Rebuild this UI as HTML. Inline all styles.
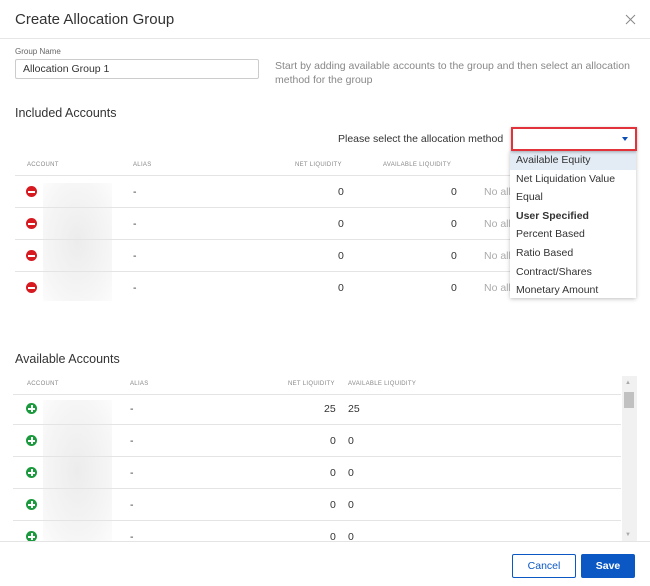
<!DOCTYPE html><html><head><style>
*{margin:0;padding:0;box-sizing:border-box}
body{width:650px;height:586px;background:#fff;font-family:"Liberation Sans",sans-serif;color:#333;position:relative;overflow:hidden}
.a{position:absolute;white-space:nowrap}
.h{font-size:6px;color:#888;letter-spacing:.3px}
.line{position:absolute;height:1px;background:#e4e4e4}
.t{font-size:10.5px;color:#333}
.blur{position:absolute;left:43px;width:69px;background:radial-gradient(ellipse at 50% 50%,#ececec,#f6f6f6 70%,#fcfcfc)}
.ic{position:absolute;left:26px;width:11px;height:11px;border-radius:50%}
.ic.r{background:#d71920}.ic.g{background:#1a9a3c}
.ic.r:after{content:"";position:absolute;left:2px;top:4.5px;width:7px;height:2px;background:#fff}
.ic.g:after{content:"";position:absolute;left:2px;top:4.5px;width:7px;height:2px;background:#fff}
.ic.g:before{content:"";position:absolute;left:4.5px;top:2px;width:2px;height:7px;background:#fff}
.dd div{height:18.6px;line-height:18.6px;padding-left:6px;font-size:10.5px;color:#333}
</style></head><body>
<div class="a" style="left:15px;top:11px;font-size:15px;color:#333">Create Allocation Group</div>
<svg class="a" style="left:625px;top:14px" width="11" height="11"><path d="M1 1L10 10M10 1L1 10" stroke="#888" stroke-width="1"/></svg>
<div class="line" style="left:0;top:38px;width:650px;background:#e6e6e6"></div>
<div class="a" style="left:15px;top:47px;font-size:8px;color:#666">Group Name</div>
<div class="a" style="left:15px;top:59px;width:244px;height:20px;border:1px solid #ccc;border-radius:2px;font-size:10.5px;padding:3px 0 0 7px;color:#333">Allocation Group 1</div>
<div class="a" style="left:275px;top:59px;font-size:10.5px;color:#888;line-height:14px">Start by adding available accounts to the group and then select an allocation<br>method for the group</div>
<div class="a" style="left:15px;top:106px;font-size:12.5px;color:#333">Included Accounts</div>
<div class="a" style="left:338px;top:133px;font-size:10.5px;color:#333">Please select the allocation method</div>
<div class="a dd" style="left:510px;top:151px;width:126px;height:147px;background:#fff;box-shadow:0 1px 4px rgba(0,0,0,.25);z-index:2">
<div style="background:#e3ebf5">Available Equity</div><div>Net Liquidation Value</div><div>Equal</div><div style="font-weight:bold">User Specified</div><div>Percent Based</div><div>Ratio Based</div><div>Contract/Shares</div><div>Monetary Amount</div></div>
<div class="a" style="left:511px;top:127px;width:126px;height:24px;border:2px solid #e2323a;box-shadow:0 1px 3px rgba(0,0,0,.3);background:#fff;z-index:3"></div>
<div class="a" style="left:622px;top:137px;width:0;height:0;border-left:3px solid transparent;border-right:3px solid transparent;border-top:4px solid #0b4fb5;z-index:4"></div>
<div class="a h" style="left:27px;top:162px">ACCOUNT</div>
<div class="a h" style="left:133px;top:162px">ALIAS</div>
<div class="a h" style="left:295px;top:162px">NET LIQUIDITY</div>
<div class="a h" style="left:383px;top:162px">AVAILABLE LIQUIDITY</div>
<div class="line" style="left:15px;top:175px;width:621px"></div>
<div class="blur" style="top:183px;height:118px"></div>
<div class="ic r" style="top:186px"></div><div class="a t" style="left:133px;top:186px">-</div><div class="a t" style="left:338px;top:186px">0</div><div class="a t" style="left:451px;top:186px">0</div><div class="a t" style="left:484px;top:186px;color:#aaa">No all</div>
<div class="line" style="left:15px;top:207px;width:621px"></div>
<div class="ic r" style="top:218px"></div><div class="a t" style="left:133px;top:218px">-</div><div class="a t" style="left:338px;top:218px">0</div><div class="a t" style="left:451px;top:218px">0</div><div class="a t" style="left:484px;top:218px;color:#aaa">No all</div>
<div class="line" style="left:15px;top:239px;width:621px"></div>
<div class="ic r" style="top:250px"></div><div class="a t" style="left:133px;top:250px">-</div><div class="a t" style="left:338px;top:250px">0</div><div class="a t" style="left:451px;top:250px">0</div><div class="a t" style="left:484px;top:250px;color:#aaa">No all</div>
<div class="line" style="left:15px;top:271px;width:621px"></div>
<div class="ic r" style="top:282px"></div><div class="a t" style="left:133px;top:282px">-</div><div class="a t" style="left:338px;top:282px">0</div><div class="a t" style="left:451px;top:282px">0</div><div class="a t" style="left:484px;top:282px;color:#aaa">No all</div>
<div class="a" style="left:15px;top:352px;font-size:12.5px;color:#333">Available Accounts</div>
<div class="a h" style="left:27px;top:381px">ACCOUNT</div>
<div class="a h" style="left:130px;top:381px">ALIAS</div>
<div class="a h" style="left:288px;top:381px">NET LIQUIDITY</div>
<div class="a h" style="left:348px;top:381px">AVAILABLE LIQUIDITY</div>
<div class="line" style="left:13px;top:394px;width:608px"></div>
<div class="blur" style="top:400px;height:142px"></div>
<div class="ic g" style="top:403px"></div><div class="a t" style="left:130px;top:403px">-</div><div class="a t" style="left:324px;top:403px">25</div><div class="a t" style="left:348px;top:403px">25</div>
<div class="line" style="left:13px;top:424px;width:608px"></div>
<div class="ic g" style="top:435px"></div><div class="a t" style="left:130px;top:435px">-</div><div class="a t" style="left:330px;top:435px">0</div><div class="a t" style="left:348px;top:435px">0</div>
<div class="line" style="left:13px;top:456px;width:608px"></div>
<div class="ic g" style="top:467px"></div><div class="a t" style="left:130px;top:467px">-</div><div class="a t" style="left:330px;top:467px">0</div><div class="a t" style="left:348px;top:467px">0</div>
<div class="line" style="left:13px;top:488px;width:608px"></div>
<div class="ic g" style="top:499px"></div><div class="a t" style="left:130px;top:499px">-</div><div class="a t" style="left:330px;top:499px">0</div><div class="a t" style="left:348px;top:499px">0</div>
<div class="line" style="left:13px;top:520px;width:608px"></div>
<div class="ic g" style="top:531px"></div><div class="a t" style="left:130px;top:531px">-</div><div class="a t" style="left:330px;top:531px">0</div><div class="a t" style="left:348px;top:531px">0</div>
<div class="a" style="left:622px;top:376px;width:15px;height:166px;background:#f1f1f1"></div>
<div class="a" style="left:625px;top:380px;font-size:6px;color:#aaa">▲</div>
<div class="a" style="left:625px;top:532px;font-size:6px;color:#aaa">▼</div>
<div class="a" style="left:624px;top:392px;width:10px;height:16px;background:#c1c1c1"></div>
<div class="a" style="left:0;top:541px;width:650px;height:45px;background:#fff;border-top:1px solid #e4e4e4"></div>
<div class="a" style="left:512px;top:554px;width:64px;height:24px;border:1px solid #0b58c4;border-radius:2px;color:#0b58c4;font-size:10.5px;text-align:center;line-height:22px">Cancel</div>
<div class="a" style="left:581px;top:554px;width:54px;height:24px;background:#0b58c4;border-radius:2px;color:#fff;font-size:10.5px;font-weight:bold;text-align:center;line-height:24px">Save</div>
</body></html>
